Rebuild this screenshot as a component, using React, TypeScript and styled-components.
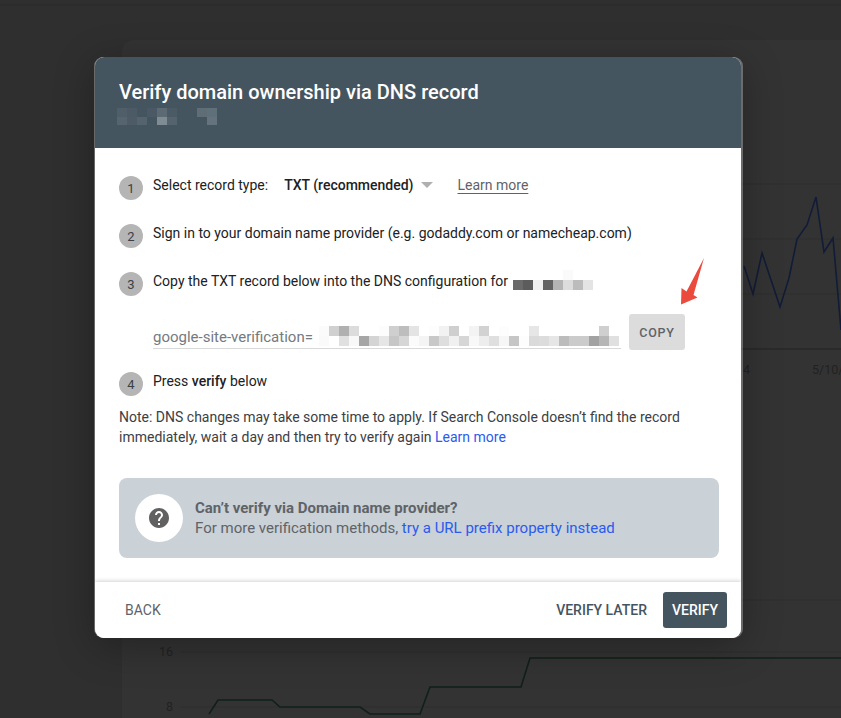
// App.tsx
import { createGlobalStyle } from 'styled-components';
import styled from 'styled-components';
import { MdHelp } from 'react-icons/md';

const GlobalStyle = createGlobalStyle`
  html, body {
    margin: 0;
    padding: 0;
    background: #2f2f2f;
    font-family: Roboto, "Liberation Sans", sans-serif;
    -webkit-font-smoothing: antialiased;
  }
`;

// blurred-out bits of the screenshot, one colour string per row ('' = no cell)
const headerRows = [
  ['#4f5e69', '#4b5a65', '', '#4a5965', '#5c6a74', '#4b5a65', '', '', '#5f6d77', '#60707a'],
  ['#56646f', '#4c5b66', '#54636e', '', '#7f8c94', '#54636e', '', '', '', '#64737d'],
];

const domainRows = [
  ['', '', '', '', '', '#fafafa', '', ''],
  ['#6a6a6a', '#5c5c5c', '#efefef', '#626262', '#b4b4b4', '#dcdcdc', '#bcbcbc', '#e4e4e4'],
];

const recordRows = [
  ['', '#fbfbfb', '#d0d0d0', '#b0b0b0', '#dcdcdc', '', '', '#fcfcfc', '#cfcfcf', '#bdbdbd', '#e4e4e4', '', '#fdfdfd', '#f2f2f2', '#cfcfcf', '', '#f3f3f3', '#d2d2d2', '', '#fdfdfd', '', '', '#e6e6e6', '', '', '', '', '', '', '#cfcfcf', ''],
  ['', '#fafafa', '', '#e0e0e0', '#f8f8f8', '#a6a6a6', '#d4d4d4', '#e6e6e6', '#c6c6c6', '#d6d6d6', '#fbfbfb', '#f4f4f4', '#c8c8c8', '#dedede', '#f0f0f0', '#d6d6d6', '#f8f8f8', '#ededed', '#dfdfdf', '#f6f6f6', '#c6c6c6', '#fdfdfd', '#dadada', '#dcdcdc', '#e6e6e6', '#bcbcbc', '#cbcbcb', '#cbcbcb', '#a2a2a2', '#b6b6b6', '#e0e0e0'],
];

const Mosaic = ({ rows, cellW, cellH }: { rows: string[][]; cellW: number; cellH: number }) => (
  <svg width={rows[0].length * cellW} height={rows.length * cellH} shapeRendering="crispEdges">
    {rows.map((row, y) =>
      row.map((fill, x) =>
        fill ? <rect key={`${x}-${y}`} x={x * cellW} y={y * cellH} width={cellW} height={cellH} fill={fill} /> : null
      )
    )}
  </svg>
);

const BackgroundChart = () => (
  <BackdropSvg viewBox="0 0 841 718" width={841} height={718}>
    <path d="M122 718V52a12 12 0 0 1 12-12H841V718Z" fill="#333333" />
    <path d="M0 5H841" stroke="#2b2b2b" strokeWidth="1" />
    <path d="M741 184H841M741 239H841M741 294H841" stroke="#2e2e2e" />
    <path d="M741 349H841" stroke="#222222" />
    <path d="M744 266L753 294L762 253L780 307L789 278L797 239L807 225L816 197L824 252L833 238L841 330" fill="none" stroke="#111c38" strokeWidth="1.6" />
    <ChartLabel x="743" y="374">4</ChartLabel>
    <ChartLabel x="812" y="374">5/10/</ChartLabel>
    <path d="M180 652H841M180 707H841M741 600H841" stroke="#2e2e2e" />
    <ChartLabel x="173" y="656" textAnchor="end">16</ChartLabel>
    <ChartLabel x="173" y="711" textAnchor="end">8</ChartLabel>
    <path d="M209 714L218 700H272L280 707H360L370 714H420L430 687H521L530 658H841" fill="none" stroke="#10201a" strokeWidth="1.6" />
  </BackdropSvg>
);

const App = () => (
  <Page>
    <GlobalStyle />
    <BackgroundChart />
    <Dialog>
      <Header>
        <Title>Verify domain ownership via DNS record</Title>
        <HeaderMask>
          <Mosaic rows={headerRows} cellW={10} cellH={8.5} />
        </HeaderMask>
      </Header>
      <Body>
        <Step>
          <StepNumber>1</StepNumber>
          <StepText>Select record type:</StepText>
          <RecordSelect>
            TXT (recommended)
            <Caret />
          </RecordSelect>
          <MutedLink href="#">Learn more</MutedLink>
        </Step>
        <Step>
          <StepNumber>2</StepNumber>
          <StepText>Sign in to your domain name provider (e.g. godaddy.com or namecheap.com)</StepText>
        </Step>
        <Step>
          <StepNumber>3</StepNumber>
          <StepText>Copy the TXT record below into the DNS configuration for</StepText>
          <DomainMask>
            <Mosaic rows={domainRows} cellW={10} cellH={10} />
          </DomainMask>
        </Step>
        <RecordRow>
          <RecordField>
            <RecordText>google-site-verification=</RecordText>
            <RecordMask>
              <Mosaic rows={recordRows} cellW={10} cellH={10} />
            </RecordMask>
            <RecordDot />
          </RecordField>
          <CopyButton>COPY</CopyButton>
          <ArrowMark width="30" height="52" viewBox="0 0 30 52">
            <path d="M26 2L15.5 39L19.5 41.500L3 48.500L3.500 32L8.500 35.500Z" fill="#ea4b3c" />
          </ArrowMark>
        </RecordRow>
        <LastStep>
          <StepNumber>4</StepNumber>
          <StepText>Press <strong>verify</strong> below</StepText>
        </LastStep>
        <Note>
          Note: DNS changes may take some time to apply. If Search Console doesn’t find the record
          immediately, wait a day and then try to verify again <BlueLink href="#">Learn more</BlueLink>
        </Note>
        <InfoBox>
          <HelpCircle>
            <MdHelp size={24} color="#616161" />
          </HelpCircle>
          <InfoText>
            <InfoTitle>Can’t verify via Domain name provider?</InfoTitle>
            <div>For more verification methods, <BlueLink href="#">try a URL prefix property instead</BlueLink></div>
          </InfoText>
        </InfoBox>
      </Body>
      <Footer>
        <BackButton>BACK</BackButton>
        <FooterActions>
          <LaterButton>VERIFY LATER</LaterButton>
          <VerifyButton>VERIFY</VerifyButton>
        </FooterActions>
      </Footer>
    </Dialog>
  </Page>
);

export default App;

const Page = styled.div`
  position: relative;
  width: 841px;
  height: 718px;
  overflow: hidden;
  padding: 57px 0 0 95px;
  box-sizing: border-box;
`;

const BackdropSvg = styled.svg`
  position: absolute;
  left: 0;
  top: 0;
`;

const ChartLabel = styled.text`
  fill: #222222;
  font-size: 12.500px;
  font-family: Roboto, sans-serif;
`;

const Dialog = styled.div`
  position: relative;
  width: 646px;
  height: 581px;
  display: flex;
  flex-direction: column;
  background: #ffffff;
  border-radius: 9px;
  overflow: hidden;
  color: #202124;
  box-shadow: -1px 0 0 rgba(255, 255, 255, 0.3), 2px 0 0 rgba(255, 255, 255, 0.3), 0 8px 40px rgba(0, 0, 0, 0.3);
`;

const Header = styled.div`
  height: 91px;
  box-sizing: border-box;
  padding: 22px 24px 0;
  background: #455560;
  color: #ffffff;
`;

const Title = styled.div`
  font-size: 20px;
  font-weight: 500;
  line-height: 26px;
  margin-bottom: 3px;
`;

const HeaderMask = styled.div`
  margin-left: -2px;
  line-height: 0;
`;

const Body = styled.div`
  flex: 1;
  padding: 28px 22px 0 24px;
  font-size: 14px;
`;

const Step = styled.div`
  display: flex;
  align-items: flex-start;
  height: 24px;
  margin-bottom: 24px;
`;

const LastStep = styled(Step)`
  margin-top: 22px;
  margin-bottom: 11px;

  strong {
    font-weight: 500;
  }
`;

const StepNumber = styled.div`
  width: 24px;
  height: 24px;
  flex-shrink: 0;
  display: flex;
  align-items: center;
  justify-content: center;
  margin-right: 10px;
  border-radius: 50%;
  background: #b5b5b5;
  font-size: 13px;
  color: #3c4043;
`;

const StepText = styled.div`
  line-height: 18px;
`;

const RecordSelect = styled.div`
  display: flex;
  align-items: center;
  margin-left: 16px;
  font-weight: 500;
  line-height: 18px;
`;

const Caret = styled.span`
  width: 0;
  height: 0;
  margin-left: 7px;
  border-left: 6px solid transparent;
  border-right: 6px solid transparent;
  border-top: 6px solid #b0b0b0;
`;

const MutedLink = styled.a`
  margin-left: 25px;
  line-height: 18px;
  color: #5f6368;
  text-decoration: underline;
  text-underline-offset: 3px;
`;

const DomainMask = styled.div`
  margin: -2px 0 0 5px;
  line-height: 0;
`;

const RecordRow = styled.div`
  position: relative;
  display: flex;
  align-items: flex-start;
  height: 36px;
  margin: -6px 0 0 34px;
`;

const RecordField = styled.div`
  width: 468px;
  height: 35px;
  box-sizing: border-box;
  display: flex;
  align-items: flex-end;
  padding-bottom: 2px;
  border-bottom: 1px solid #d9d9d9;
  font-size: 15px;
  line-height: 20px;
  color: #757a80;
  white-space: nowrap;
  overflow: hidden;
`;

const RecordText = styled.span`
  margin-bottom: -1px;
`;

const RecordMask = styled.div`
  flex-shrink: 0;
  margin-left: -4px;
  line-height: 0;
`;

const RecordDot = styled.span`
  width: 2px;
  height: 2px;
  margin: 0 0 3px 2px;
  background: #80868b;
`;

const CopyButton = styled.button`
  width: 56px;
  height: 36px;
  margin-left: 8px;
  padding: 0;
  border: none;
  border-radius: 3px;
  background: #dcdcdc;
  color: #5f6368;
  font-family: inherit;
  font-size: 12.500px;
  font-weight: 500;
  letter-spacing: 0.8px;
`;

const ArrowMark = styled.svg`
  position: absolute;
  left: 525px;
  top: -58px;
`;

const Note = styled.div`
  line-height: 20px;
  color: #3c4043;
`;

const BlueLink = styled.a`
  color: #2a5bee;
  text-decoration: none;
`;

const InfoBox = styled.div`
  display: flex;
  align-items: center;
  height: 80px;
  margin-top: 31px;
  padding-left: 16px;
  border-radius: 8px;
  background: #cad1d7;
  box-sizing: border-box;
`;

const HelpCircle = styled.div`
  width: 48px;
  height: 48px;
  flex-shrink: 0;
  display: flex;
  align-items: center;
  justify-content: center;
  margin-right: 12px;
  border-radius: 50%;
  background: #ffffff;
`;

const InfoText = styled.div`
  font-size: 15px;
  line-height: 20px;
  color: #5f6368;
`;

const InfoTitle = styled.div`
  font-weight: 700;
`;

const Footer = styled.div`
  position: relative;
  height: 56px;
  display: flex;
  align-items: center;
  justify-content: space-between;
  padding: 0 14px 0 30px;
  background: #ffffff;
  box-shadow: 0 -1px 4px rgba(0, 0, 0, 0.18);
`;

const FooterActions = styled.div`
  display: flex;
  align-items: center;
  gap: 16px;
`;

const TextButton = styled.button`
  padding: 0;
  border: none;
  background: none;
  font-family: inherit;
  font-size: 14px;
  font-weight: 500;
`;

const BackButton = styled(TextButton)`
  font-weight: 400;
  color: #5f6368;
`;

const LaterButton = styled(TextButton)`
  color: #455560;
`;

const VerifyButton = styled(TextButton)`
  width: 64px;
  height: 36px;
  border-radius: 3px;
  background: #455560;
  color: #ffffff;
`;
